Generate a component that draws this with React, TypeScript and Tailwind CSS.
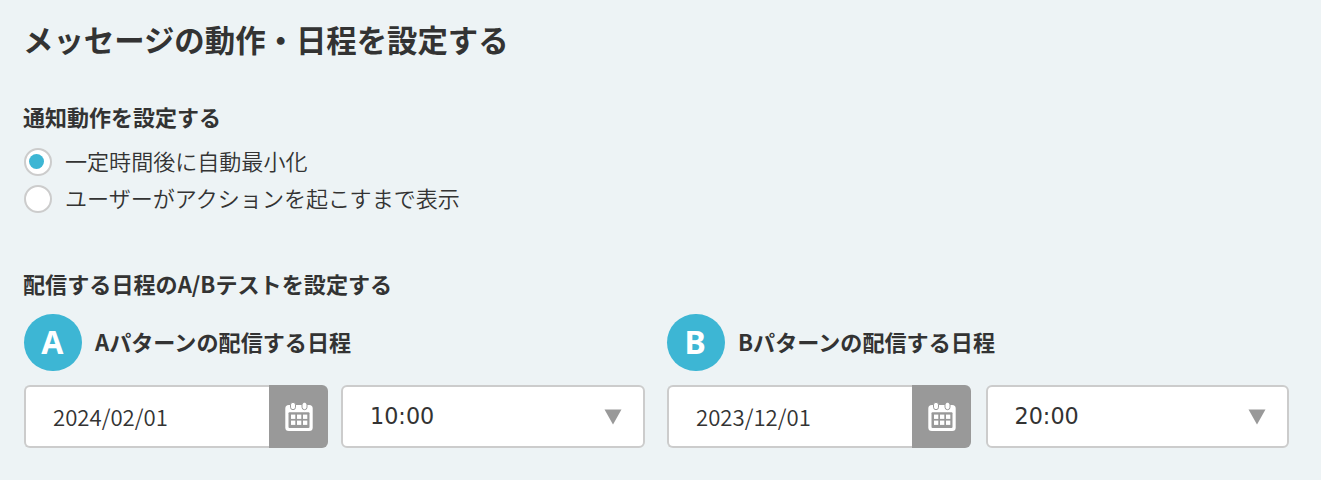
function CalendarIcon() {
  return (
    <svg className="block h-[30px] w-7" viewBox="0 0 28 30" fill="none">
      <rect x="0.3" y="3" width="27.4" height="26" rx="3.5" fill="#fff" />
      <rect x="3.5" y="10.3" width="21" height="15.6" rx="1" fill="#999" />
      <g fill="#fff">
        <rect x="6" y="12.6" width="4.3" height="4.3" />
        <rect x="12" y="12.6" width="4.3" height="4.3" />
        <rect x="18" y="12.6" width="4.3" height="4.3" />
        <rect x="6" y="18.6" width="4.3" height="4.3" />
        <rect x="12" y="18.6" width="4.3" height="4.3" />
        <rect x="18" y="18.6" width="4.3" height="4.3" />
      </g>
      <g fill="#fff" stroke="#999" strokeWidth="1">
        <rect x="5.5" y="0.3" width="5" height="7.4" rx="2.5" />
        <rect x="17" y="0.3" width="5" height="7.4" rx="2.5" />
      </g>
    </svg>
  );
}

function Radio({ label, checked }: { label: string; checked?: boolean }) {
  return (
    <div className="flex h-[37px] items-center">
      <span className="flex h-7 w-7 items-center justify-center rounded-full border-2 border-[#ccc] bg-white">
        {checked && <span className="mr-[3px] mb-px h-[15px] w-[15px] rounded-full bg-[#3db6d4]" />}
      </span>
      <span className="ml-[13px] pb-1 text-[22.05px] leading-7 font-[350] whitespace-nowrap">{label}</span>
    </div>
  );
}

function Pattern({ name, date, time }: { name: string; date: string; time: string }) {
  return (
    <section>
      <div className="flex h-[57px] items-center">
        <span className="flex h-[57px] w-[57.5px] items-center justify-center rounded-full bg-[#3db6d4] pr-px pb-px font-['Noto_Sans',sans-serif] text-[32px] leading-none font-bold text-white">
          {name}
        </span>
        <h3 className="ml-[13.5px] pb-[3px] text-[22.1px] leading-8 font-bold whitespace-nowrap">{name}パターンの配信する日程</h3>
      </div>
      <div className="mt-[14px] flex h-[63px] justify-between">
        <div className="flex w-[304px]">
          <div className="flex flex-1 items-center rounded-l-md border-2 border-r-0 border-[#ccc] bg-white pl-[27px] text-[22.2px] font-[350]">
            {date}
          </div>
          <div className="flex w-[59px] items-center justify-center rounded-r-md bg-[#999]">
            <CalendarIcon />
          </div>
        </div>
        <div className="flex w-[303.5px] items-center justify-between rounded-md border-2 border-[#ccc] bg-white pr-[21px] pl-[27px]">
          <span className="font-['DejaVu_Sans',sans-serif] text-[22.3px] leading-none">{time}</span>
          <svg className="block h-4 w-[18px]" viewBox="0 0 18 16">
            <path d="M0.5 0.5h17L9 15.5z" fill="#999" />
          </svg>
        </div>
      </div>
    </section>
  );
}

export default function App() {
  return (
    <main className="h-[480px] w-[1321px] overflow-hidden bg-[#edf3f5] pl-6 font-['Noto_Sans_CJK_JP',sans-serif] text-[#333]">
      <h1 className="-ml-px pt-[17px] text-[30.4px] leading-[44px] font-bold">メッセージの動作・日程を設定する</h1>
      <h2 className="-ml-px mt-[39px] text-[22px] leading-8 font-bold">通知動作を設定する</h2>
      <div className="mt-[11px]">
        <Radio label="一定時間後に自動最小化" checked />
        <Radio label="ユーザーがアクションを起こすまで表示" />
      </div>
      <h2 className="-ml-px mt-[50px] text-[22.1px] leading-8 font-bold">配信する日程のA/Bテストを設定する</h2>
      <div className="mt-[15px] grid grid-cols-[620.5px_622px] gap-[22.5px]">
        <Pattern name="A" date="2024/02/01" time="10:00" />
        <Pattern name="B" date="2023/12/01" time="20:00" />
      </div>
    </main>
  );
}
